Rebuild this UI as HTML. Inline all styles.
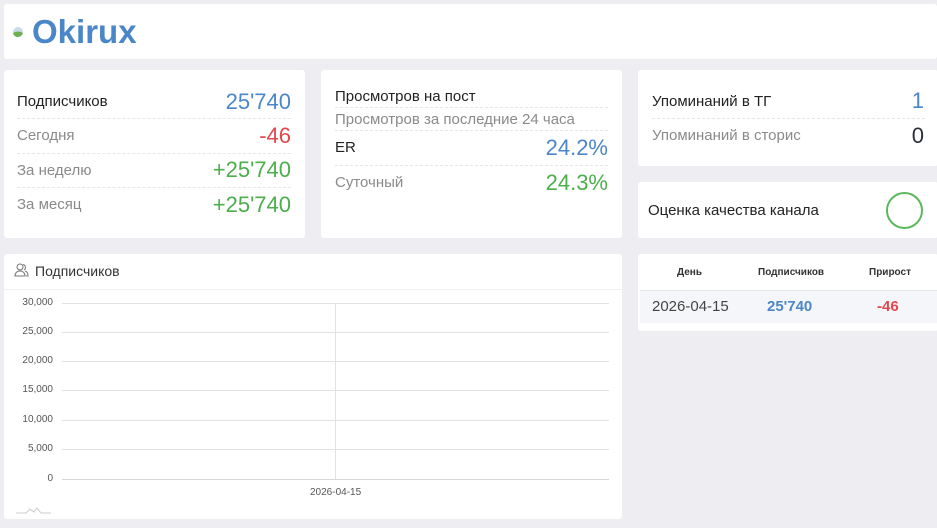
<!DOCTYPE html>
<html><head><meta charset="utf-8"><style>
*{margin:0;padding:0;box-sizing:border-box}
body{width:937px;height:528px;background:#ededf2;font-family:"Liberation Sans",sans-serif;position:relative;overflow:hidden;color:#222}
.c{position:absolute;background:#fff;border-radius:3px}
.t{position:absolute;white-space:nowrap;line-height:1}
.hr{position:absolute;border-top:1px dashed #e6e6e6;height:0}
.g{color:#8a8a8a;font-weight:300}
.blue{color:#4a86c8}.red{color:#e2474f}.grn{color:#4cae4c}
.ax{position:absolute;font-size:10px;color:#555;text-align:right;width:40px;line-height:1}
.gl{position:absolute;left:62px;width:547px;height:1px;background:#e2e2e2}
</style></head><body>
<div class="c" style="left:4px;top:4px;width:933px;height:55px"></div>
<svg style="position:absolute;left:12px;top:26px" width="12" height="12" viewBox="0 0 12 12"><circle cx="6" cy="6" r="5" fill="#c9dbe8"/><path d="M1 7 Q6 4 11 7 Q9 11 6 11 Q2 11 1 7Z" fill="#6ab04c"/></svg>
<div class="t blue" style="left:32px;top:15px;font-size:33px;font-weight:bold">Okirux</div>

<div class="c" style="left:4px;top:70px;width:301px;height:168px"></div>
<div class="t" style="left:17px;top:94px;font-size:15px">Подписчиков</div>
<div class="t blue" style="right:646px;top:91px;font-size:22px">25'740</div>
<div class="hr" style="left:17px;top:118px;width:274px"></div>
<div class="t g" style="left:17px;top:128px;font-size:15px">Сегодня</div>
<div class="t red" style="right:646px;top:125px;font-size:22px">-46</div>
<div class="hr" style="left:17px;top:153px;width:274px"></div>
<div class="t g" style="left:17px;top:163px;font-size:15px">За неделю</div>
<div class="t grn" style="right:646px;top:159px;font-size:22px">+25'740</div>
<div class="hr" style="left:17px;top:187px;width:274px"></div>
<div class="t g" style="left:17px;top:197px;font-size:15px">За месяц</div>
<div class="t grn" style="right:646px;top:194px;font-size:22px">+25'740</div>

<div class="c" style="left:321px;top:70px;width:301px;height:168px"></div>
<div class="t" style="left:335px;top:89px;font-size:15px">Просмотров на пост</div>
<div class="hr" style="left:335px;top:107px;width:273px"></div>
<div class="t g" style="left:335px;top:112px;font-size:15px">Просмотров за последние 24 часа</div>
<div class="hr" style="left:335px;top:130px;width:273px"></div>
<div class="t" style="left:335px;top:140px;font-size:15px">ER</div>
<div class="t blue" style="right:329px;top:137px;font-size:22px">24.2%</div>
<div class="hr" style="left:335px;top:165px;width:273px"></div>
<div class="t g" style="left:335px;top:175px;font-size:15px">Суточный</div>
<div class="t grn" style="right:329px;top:172px;font-size:22px">24.3%</div>

<div class="c" style="left:638px;top:70px;width:300px;height:96px"></div>
<div class="t" style="left:652px;top:94px;font-size:15px;color:#222">Упоминаний в ТГ</div>
<div class="t blue" style="right:13px;top:90px;font-size:22px">1</div>
<div class="hr" style="left:652px;top:118px;width:273px"></div>
<div class="t g" style="left:652px;top:128px;font-size:15px">Упоминаний в сторис</div>
<div class="t" style="right:13px;top:125px;font-size:22px;color:#2a2f3a">0</div>

<div class="c" style="left:638px;top:182px;width:300px;height:56px"></div>
<div class="t" style="left:648px;top:203px;font-size:15px">Оценка качества канала</div>
<div style="position:absolute;left:886px;top:192px;width:37px;height:37px;border:2px solid #5cb85c;border-radius:50%"></div>

<div class="c" style="left:638px;top:254px;width:300px;height:77px"></div>
<div class="t" style="left:677px;top:268px;font-size:10px;font-weight:bold;color:#333">День</div>
<div class="t" style="left:758px;top:268px;font-size:10px;font-weight:bold;color:#333">Подписчиков</div>
<div class="t" style="left:869px;top:268px;font-size:10px;font-weight:bold;color:#333">Прирост</div>
<div style="position:absolute;left:640px;top:290px;width:297px;height:33px;background:#f5f6f9;border-top:1px solid #e4e6ea"></div>
<div class="t" style="left:652px;top:299px;font-size:15px;color:#444">2026-04-15</div>
<div class="t blue" style="left:767px;top:299px;font-size:15px;font-weight:bold">25'740</div>
<div class="t red" style="left:877px;top:299px;font-size:15px;font-weight:bold">-46</div>

<div class="c" style="left:4px;top:254px;width:618px;height:265px"></div>
<div style="position:absolute;left:4px;top:289px;width:618px;height:1px;background:#f0f0f0"></div>
<svg style="position:absolute;left:14px;top:263px" width="15" height="14" viewBox="0 0 15 14" fill="none" stroke="#777" stroke-width="1"><circle cx="6" cy="4" r="3"/><path d="M1 13c0-3 2-5 5-5s5 2 5 5zM9 1.5a3 3 0 0 1 1 5.5M11 8c2 .5 3 2.5 3 5h-2"/></svg>
<div class="t" style="left:35px;top:264px;font-size:14px;color:#333">Подписчиков</div>
<div class="ax" style="left:13px;top:298px">30,000</div>
<div class="ax" style="left:13px;top:327px">25,000</div>
<div class="ax" style="left:13px;top:356px">20,000</div>
<div class="ax" style="left:13px;top:385px">15,000</div>
<div class="ax" style="left:13px;top:415px">10,000</div>
<div class="ax" style="left:13px;top:444px">5,000</div>
<div class="ax" style="left:13px;top:474px">0</div>
<div class="gl" style="top:303px"></div>
<div class="gl" style="top:332px"></div>
<div class="gl" style="top:361px"></div>
<div class="gl" style="top:390px"></div>
<div class="gl" style="top:420px"></div>
<div class="gl" style="top:449px"></div>
<div class="gl" style="top:479px;background:#d6d6d6"></div>
<div style="position:absolute;left:335px;top:303px;width:1px;height:176px;background:#e2e2e2"></div>
<div class="t" style="left:310px;top:488px;font-size:10px;color:#555">2026-04-15</div>
<svg style="position:absolute;left:16px;top:502px" width="36" height="12" viewBox="0 0 36 12" fill="none" stroke="#ccc" stroke-width="1"><path d="M0 11h10l4-4 4 3 3-4 4 5h10"/></svg>
</body></html>
